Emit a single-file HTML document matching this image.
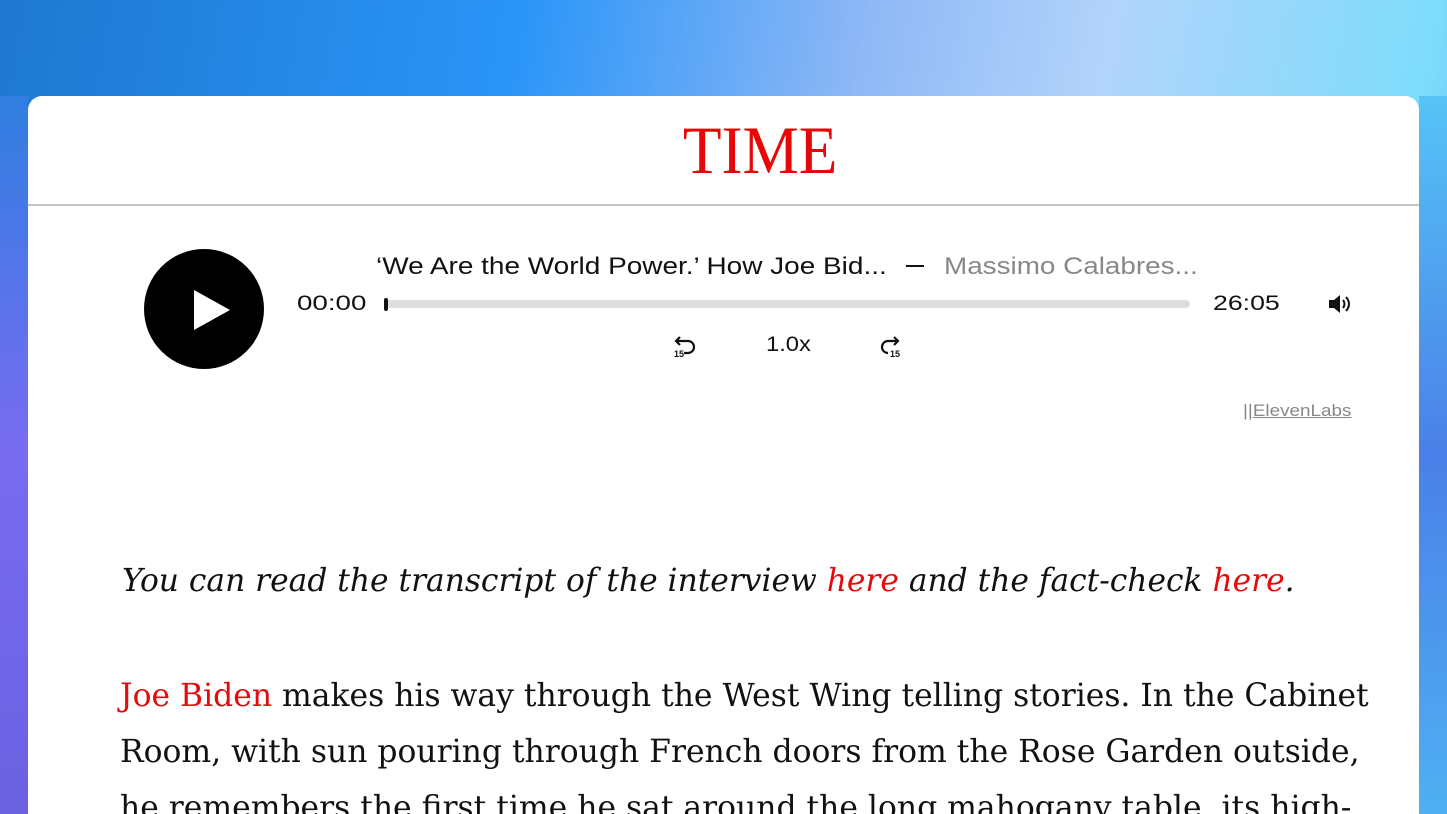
<!DOCTYPE html>
<html><head><meta charset="utf-8"><style>
*{margin:0;padding:0;box-sizing:border-box}
html,body{width:1447px;height:814px;overflow:hidden}
body{position:relative;background:linear-gradient(100deg,#1e78d0 0%,#2a95f8 33%,#8fb8f6 55%,#b2d4fb 70%,#7fdcfb 90%,#5bc6f6 100%);}
.bgl{position:absolute;left:0;top:96px;width:28px;height:718px;background:linear-gradient(180deg,#2f7ee0 0%,#7a6cf0 50%,#6a60e0 100%)}
.bgr{position:absolute;right:0;top:96px;width:28px;height:718px;background:linear-gradient(180deg,#56c4f6 0%,#4a80e8 50%,#4fb0f2 100%)}
.card{position:absolute;left:28px;top:96px;width:1391px;height:740px;background:#fff;border-radius:14px 14px 0 0}
.logo{position:absolute;left:0;width:100%;top:111px;text-align:center;font-family:"Liberation Serif",serif;color:#e90606;font-size:68px;line-height:78px}
.logo span{display:inline-block;transform:translateX(37px) scaleX(0.93)}
.hr{position:absolute;left:28px;top:204px;width:1391px;height:2px;background:#c4c4c4}
.sans{font-family:"Liberation Sans",sans-serif;transform-origin:left center}
.play{position:absolute;left:144px;top:249px;width:120px;height:120px;border-radius:50%;background:#000}
.t{position:absolute;white-space:nowrap}
.bar{position:absolute;left:385px;top:300px;width:805px;height:8px;border-radius:4px;background:#dedede}
.serif{font-family:"DejaVu Serif",serif;color:#111}
.red{color:#e30b0b}
</style></head><body>
<div class="bgl"></div><div class="bgr"></div>
<div class="card"></div>
<div class="logo"><span>TIME</span></div>
<div class="hr"></div>
<div class="play"><svg width="120" height="120"><polygon points="50,41 50,81 86,61" fill="#fff"/></svg></div>
<div class="t sans" style="left:376px;top:253px;font-size:24px;color:#111;transform:scaleX(1.165)">‘We Are the World Power.’ How Joe Bid...</div>
<div class="t" style="left:906px;top:265px;width:18px;height:2px;background:#111"></div>
<div class="t sans" style="left:944px;top:253px;font-size:24px;color:#888;transform:scaleX(1.16)">Massimo Calabres...</div>
<div class="t sans" style="left:297px;top:292px;font-size:21px;color:#111;transform:scaleX(1.32)">00:00</div>
<div class="bar"></div>
<div class="t" style="left:384px;top:298px;width:4px;height:13px;background:#111;border-radius:2px"></div>
<div class="t sans" style="left:1213px;top:292px;font-size:21px;color:#111;transform:scaleX(1.27)">26:05</div>
<svg class="t" style="left:1327px;top:293px" width="26" height="22" viewBox="0 0 26 22"><path d="M2 7h5l6-5v18l-6-5H2z" fill="#111"/><path d="M16 7q3 4 0 8M19 4q6 7 0 14" stroke="#111" stroke-width="2" fill="none"/></svg>
<svg class="t" style="left:672px;top:334px" width="26" height="26" viewBox="0 0 26 26"><path d="M4 7h12a6 6 0 0 1 0 12h-4M8 3L4 7l4 4" stroke="#111" stroke-width="2.2" fill="none"/><text x="2" y="23" font-size="9" font-family="Liberation Sans" font-weight="bold" fill="#111">15</text></svg>
<div class="t sans" style="left:766px;top:333px;font-size:21px;color:#111;transform:scaleX(1.13)">1.0x</div>
<svg class="t" style="left:878px;top:334px" width="26" height="26" viewBox="0 0 26 26"><path d="M20 7H10a6 6 0 0 0 0 12M16 3l4 4-4 4" stroke="#111" stroke-width="2.2" fill="none"/><text x="12" y="23" font-size="9" font-family="Liberation Sans" font-weight="bold" fill="#111">15</text></svg>
<div class="t sans" style="left:1243px;top:401px;font-size:17px;color:#888;transform:scaleX(1.11)">||<span style="text-decoration:underline">ElevenLabs</span></div>
<div class="t serif" style="left:122px;top:563px;font-size:31.3px;font-style:italic">You can read the transcript of the interview <span class="red">here</span> and the fact-check <span class="red">here</span>.</div>
<div class="t serif" style="left:120px;top:668px;font-size:31.4px;line-height:56px">
<span class="red">Joe Biden</span> makes his way through the West Wing telling stories. In the Cabinet<br>Room, with sun pouring through French doors from the Rose Garden outside,<br>he remembers the first time he sat around the long mahogany table, its high-</div>
</body></html>
